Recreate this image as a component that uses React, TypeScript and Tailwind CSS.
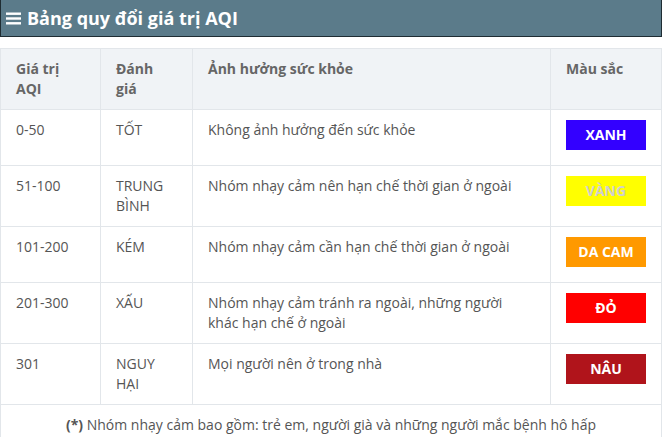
import React from "react";

const rows = [
  { v: "0-50", r: "TỐT", e: "Không ảnh hưởng đến sức khỏe", c: "XANH", bg: "bg-[#3300ff]", fg: "text-white" },
  { v: "51-100", r: "TRUNG BÌNH", e: "Nhóm nhạy cảm nên hạn chế thời gian ở ngoài", c: "VÀNG", bg: "bg-[#ffff00]", fg: "text-[#cfcfcf]" },
  { v: "101-200", r: "KÉM", e: "Nhóm nhạy cảm cần hạn chế thời gian ở ngoài", c: "DA CAM", bg: "bg-[#ff9900]", fg: "text-white" },
  { v: "201-300", r: "XẤU", e: "Nhóm nhạy cảm tránh ra ngoài, những người khác hạn chế ở ngoài", c: "ĐỎ", bg: "bg-[#ff0000]", fg: "text-white" },
  { v: "301", r: "NGUY HẠI", e: "Mọi người nên ở trong nhà", c: "NÂU", bg: "bg-[#b0141b]", fg: "text-white" },
];

export default function App() {
  return (
    <div className="w-[663px] h-[437px] overflow-hidden bg-white font-['Open_Sans',sans-serif] text-[14px] leading-[20px] text-[#555]">
      <div className="w-[662px] h-[37px] bg-[#5b7b8a] border-x border-b border-[#1f2d33] flex items-center pl-[5px] gap-[6px] text-white">
        <svg width="15" height="13" viewBox="0 0 15 13" className="mt-[1px]">
          <rect x="0" y="0.5" width="15" height="2.4" fill="white" />
          <rect x="0" y="5.3" width="15" height="2.4" fill="white" />
          <rect x="0" y="10.1" width="15" height="2.4" fill="white" />
        </svg>
        <span className="font-bold text-[18px] leading-[24px]">Bảng quy đổi giá trị AQI</span>
      </div>
      <div className="h-[11px]" />
      <table className="w-[661px] border-collapse table-fixed">
        <colgroup>
          <col className="w-[100px]" />
          <col className="w-[92px]" />
          <col className="w-[358px]" />
          <col className="w-[111px]" />
        </colgroup>
        <thead>
          <tr className="bg-[#f0f3f6]">
            <th className="border border-[#e2e6ea] px-[15px] pt-[10px] pb-[10px] text-left align-top font-bold text-[#666]">Giá trị AQI</th>
            <th className="border border-[#e2e6ea] px-[15px] pt-[10px] pb-[10px] text-left align-top font-bold text-[#666]">Đánh giá</th>
            <th className="border border-[#e2e6ea] px-[15px] pt-[10px] pb-[10px] text-left align-top font-bold text-[#666]">Ảnh hưởng sức khỏe</th>
            <th className="border border-[#e2e6ea] px-[15px] pt-[10px] pb-[10px] text-left align-top font-bold text-[#666]">Màu sắc</th>
          </tr>
        </thead>
        <tbody>
          {rows.map((row) => (
            <tr key={row.v}>
              <td className="border border-[#e2e6ea] px-[15px] py-[10px] align-top">{row.v}</td>
              <td className="border border-[#e2e6ea] px-[15px] py-[10px] align-top">{row.r}</td>
              <td className="border border-[#e2e6ea] px-[15px] py-[10px] align-top">{row.e}</td>
              <td className="border border-[#e2e6ea] px-[15px] py-[10px] align-top">
                <div className={`w-[80px] h-[30px] mb-[5px] flex items-center justify-center font-bold ${row.bg} ${row.fg}`}>{row.c}</div>
              </td>
            </tr>
          ))}
          <tr>
            <td colSpan={4} className="border border-[#e2e6ea] px-[15px] py-[10px] text-center">
              <b>(*)</b> Nhóm nhạy cảm bao gồm: trẻ em, người già và những người mắc bệnh hô hấp
            </td>
          </tr>
        </tbody>
      </table>
    </div>
  );
}
